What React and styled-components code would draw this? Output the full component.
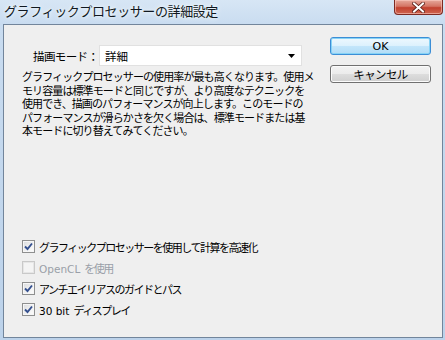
import React from "react";
import styled, { createGlobalStyle } from "styled-components";

const GlobalStyle = createGlobalStyle`
  html, body {
    margin: 0;
    padding: 0;
  }
  body {
    width: 445px;
    height: 340px;
    overflow: hidden;
    font-family: "Noto Sans CJK JP", "DejaVu Sans", sans-serif;
    color: #000;
  }
`;

const Window = styled.div`
  width: 445px;
  height: 340px;
  box-sizing: border-box;
  display: flex;
  flex-direction: column;
  padding: 0 2px 2px 3px;
  background: linear-gradient(180deg, #d7e6f5 0%, #c9dcf0 24px, #bcd2ea 100%);
`;

const TitleBar = styled.div`
  height: 24px;
  display: flex;
  justify-content: space-between;
  align-items: flex-start;
`;

const Title = styled.div`
  padding-left: 1px;
  font-size: 13px;
  line-height: 21px;
  letter-spacing: -0.4px;
  color: #101820;
  text-shadow: 0 0 6px #f4f9ff, 0 0 3px #f4f9ff;
`;

const CloseButton = styled.div`
  width: 47px;
  height: 14px;
  display: flex;
  align-items: center;
  justify-content: center;
  border: 1px solid #7d2a22;
  border-top: none;
  border-radius: 0 0 4px 4px;
  background: linear-gradient(180deg, #e6a99c 0%, #d47464 45%, #c2412f 55%, #cf6550 100%);
  box-shadow: inset 0 0 0 1px rgba(255, 210, 200, 0.55);
`;

const Client = styled.div`
  flex: 1;
  display: flex;
  border: 1px solid #72859b;
  background: #efefef;
`;

const Main = styled.div`
  flex: 1;
  display: flex;
  flex-direction: column;
  padding: 20px 0 17px 18px;
`;

const ModeRow = styled.div`
  display: flex;
  align-items: center;
  padding-left: 11px;
`;

const ModeLabel = styled.span`
  width: 66px;
  font-size: 11.5px;
  letter-spacing: -0.6px;
  white-space: nowrap;
`;

const Select = styled.div`
  width: 203px;
  height: 21px;
  box-sizing: border-box;
  display: flex;
  align-items: center;
  justify-content: space-between;
  padding: 0 6px 0 5px;
  border: 1px solid #e1e1e1;
  background: #fff;
  font-size: 11.5px;
`;

const Description = styled.p`
  margin: 4px 0 0;
  font-size: 11px;
  line-height: 13.5px;
  letter-spacing: -0.9px;
  white-space: nowrap;
`;

const Checks = styled.div`
  margin-top: auto;
  display: flex;
  flex-direction: column;
`;

const CheckRow = styled.label`
  height: 21px;
  display: flex;
  align-items: center;
  gap: 4px;
  font-size: 11px;
  letter-spacing: -1.5px;
  white-space: nowrap;
  color: ${(p) => (p.disabled ? "#9a9fa8" : "#000")};
`;

const Latin = styled.span`
  font-family: "DejaVu Sans", sans-serif;
  font-size: 10.5px;
  letter-spacing: 0;
  margin-right: 4px;
`;

const Box = styled.span`
  width: 13px;
  height: 13px;
  flex-shrink: 0;
  box-sizing: border-box;
  display: flex;
  align-items: center;
  justify-content: center;
  border: 1px solid ${(p) => (p.disabled ? "#c9c9c9" : "#8e8f8f")};
  background: ${(p) =>
    p.disabled
      ? "#f4f4f4"
      : "linear-gradient(135deg, #d9dbde 0%, #f2f2f2 60%, #fefefe 100%)"};
  box-shadow: inset 0 0 0 1px ${(p) => (p.disabled ? "#e6e6e6" : "#f6f6f6")};
`;

const Side = styled.div`
  width: 101px;
  padding: 12px 11px 0 0;
  display: flex;
  flex-direction: column;
  gap: 10px;
`;

const Button = styled.div`
  height: 18px;
  box-sizing: border-box;
  display: flex;
  align-items: center;
  justify-content: center;
  border-radius: 3px;
  font-family: "DejaVu Sans", "Noto Sans CJK JP", sans-serif;
  font-size: ${(p) => (p.primary ? "11px" : "11.5px")};
  letter-spacing: ${(p) => (p.primary ? "0" : "-0.6px")};
  border: 1px solid ${(p) => (p.primary ? "#3c8ed6" : "#707070")};
  background: ${(p) =>
    p.primary
      ? "linear-gradient(180deg, #eef8fe 0%, #dcf1fd 50%, #c3e6fb 51%, #b2dcf6 100%)"
      : "linear-gradient(180deg, #f3f3f3 0%, #ebebeb 50%, #dddddd 51%, #cfcfcf 100%)"};
  box-shadow: inset 0 0 0 1px ${(p) => (p.primary ? "#86d3f6" : "#fbfbfb")};
`;

const Check = () => (
  <svg width="9" height="9" viewBox="0 0 9 9">
    <path d="M1 4.5 L3.5 7 L8 1.5" fill="none" stroke="#34508f" strokeWidth="1.9" />
  </svg>
);

const checks = [
  { label: "グラフィックプロセッサーを使用して計算を高速化", checked: true },
  { latin: "OpenCL", label: "を使用", disabled: true },
  { label: "アンチエイリアスのガイドとパス", checked: true },
  { latin: "30 bit", label: "ディスプレイ", checked: true },
];

const lines = [
  "グラフィックプロセッサーの使用率が最も高くなります。使用メ",
  "モリ容量は標準モードと同じですが、より高度なテクニックを",
  "使用でき、描画のパフォーマンスが向上します。このモードの",
  "パフォーマンスが滑らかさを欠く場合は、標準モードまたは基",
  "本モードに切り替えてみてください。",
];

export default function App() {
  return (
    <>
      <GlobalStyle />
      <Window>
        <TitleBar>
          <Title>グラフィックプロセッサーの詳細設定</Title>
          <CloseButton>
            <svg width="13" height="11" viewBox="0 0 13 11">
              <path
                d="M2 1.5 L11 9.5 M11 1.5 L2 9.5"
                stroke="#5a1d16"
                strokeWidth="3.6"
                strokeLinecap="square"
              />
              <path
                d="M2 1.5 L11 9.5 M11 1.5 L2 9.5"
                stroke="#fff"
                strokeWidth="2"
                strokeLinecap="square"
              />
            </svg>
          </CloseButton>
        </TitleBar>
        <Client>
          <Main>
            <ModeRow>
              <ModeLabel>描画モード：</ModeLabel>
              <Select>
                <span>詳細</span>
                <svg width="7" height="4" viewBox="0 0 7 4">
                  <path d="M0 0 H7 L3.5 4 Z" fill="#000" />
                </svg>
              </Select>
            </ModeRow>
            <Description>
              {lines.map((l, i) => (
                <React.Fragment key={i}>
                  {l}
                  <br />
                </React.Fragment>
              ))}
            </Description>
            <Checks>
              {checks.map((c, i) => (
                <CheckRow key={i} disabled={c.disabled}>
                  <Box disabled={c.disabled}>{c.checked && <Check />}</Box>
                  <span>
                    {c.latin && <Latin>{c.latin}</Latin>}
                    {c.label}
                  </span>
                </CheckRow>
              ))}
            </Checks>
          </Main>
          <Side>
            <Button primary>OK</Button>
            <Button>キャンセル</Button>
          </Side>
        </Client>
      </Window>
    </>
  );
}
